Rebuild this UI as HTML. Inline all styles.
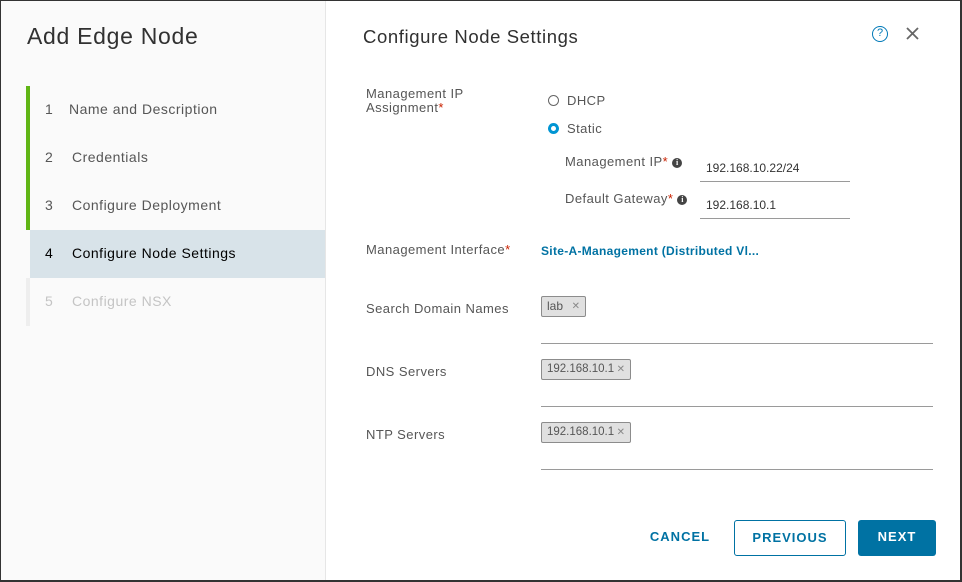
<!DOCTYPE html>
<html><head><style>
*{box-sizing:border-box;margin:0;padding:0}
body{width:962px;height:582px;overflow:hidden;font-family:"Liberation Sans",sans-serif;background:#fff;position:relative}
.frame{position:absolute;left:0;top:0;width:962px;height:582px;border:1px solid #333;border-right-width:2px;border-bottom-width:2px}
.left{position:absolute;left:1px;top:1px;width:325px;height:579px;background:#fafafa;border-right:1px solid #e6e6e6}
.t{position:absolute;font-size:14px;color:#565656;white-space:nowrap}
.step{position:absolute;left:26px;width:299px;height:48px;font-size:14px;color:#565656;letter-spacing:0.5px}
.step span{position:absolute;top:15px}
.lbl{position:absolute;font-size:13px;color:#565656;white-space:nowrap;letter-spacing:0.45px}
.req{color:#c92100}
.line{position:absolute;height:1px;background:#9a9a9a}
.tag{position:absolute;height:21px;border:1px solid #8c8c8c;border-radius:2px;background:#e0e0e0;font-size:12px;line-height:15px;color:#565656;padding:2px 5px;white-space:nowrap}
.tag i{font-style:normal;color:#888;position:absolute;right:5px;top:3px;font-size:10px;line-height:13px}
.info{display:inline-block;width:10px;height:10px;border-radius:50%;background:#444;color:#fff;font-size:8px;font-weight:bold;text-align:center;line-height:10px;vertical-align:1px;margin-left:4px;font-family:"Liberation Serif",serif;letter-spacing:0}
.btn{position:absolute;top:520px;height:36px;font-size:13px;font-weight:bold;letter-spacing:1px;text-align:center;line-height:34px;border-radius:3px}
</style></head><body>
<div class="frame"></div>
<div class="left"></div>
<div class="t" style="left:27px;top:23px;font-size:23px;color:#313131;letter-spacing:0.7px">Add Edge Node</div>
<div style="position:absolute;left:26px;top:86px;width:4px;height:144px;background:#60b515"></div>
<div style="position:absolute;left:26px;top:278px;width:4px;height:48px;background:#eee"></div>
<div class="step" style="top:86px"><span style="left:19px">1</span><span style="left:43px">Name and Description</span></div>
<div class="step" style="top:134px"><span style="left:19px">2</span><span style="left:46px">Credentials</span></div>
<div class="step" style="top:182px"><span style="left:19px">3</span><span style="left:46px">Configure Deployment</span></div>
<div class="step" style="top:230px;left:30px;width:295px;background:#d8e3e9;color:#000"><span style="left:15px">4</span><span style="left:42px">Configure Node Settings</span></div>
<div class="step" style="top:278px;color:#c4c4c4"><span style="left:19px">5</span><span style="left:46px">Configure NSX</span></div>

<div class="t" style="left:363px;top:26px;font-size:18.5px;color:#313131;letter-spacing:0.6px">Configure Node Settings</div>
<div style="position:absolute;left:872px;top:26px;width:16px;height:16px;border:1.5px solid #0079b8;border-radius:50%;color:#0079b8;font-size:11px;text-align:center;line-height:13px">?</div>
<svg style="position:absolute;left:906px;top:27px" width="13" height="13"><path d="M1 1L12 12M12 1L1 12" stroke="#666" stroke-width="1.8"/></svg>

<div class="lbl" style="left:366px;top:87px;line-height:14px">Management IP<br>Assignment<span class="req">*</span></div>
<div style="position:absolute;left:548px;top:95px;width:11px;height:11px;border:1px solid #666;border-radius:50%"></div>
<div class="lbl" style="left:567px;top:93px">DHCP</div>
<div style="position:absolute;left:548px;top:123px;width:11px;height:11px;border:3px solid #0095d3;border-radius:50%;background:#fff"></div>
<div class="lbl" style="left:567px;top:121px">Static</div>
<div class="lbl" style="left:565px;top:154px">Management IP<span class="req">*</span><span class="info">i</span></div>
<div class="lbl" style="left:706px;top:161px;color:#333;font-size:12px;letter-spacing:0">192.168.10.22/24</div>
<div class="line" style="left:700px;top:181px;width:150px"></div>
<div class="lbl" style="left:565px;top:191px">Default Gateway<span class="req">*</span><span class="info">i</span></div>
<div class="lbl" style="left:706px;top:198px;color:#333;font-size:12px;letter-spacing:0">192.168.10.1</div>
<div class="line" style="left:700px;top:218px;width:150px"></div>

<div class="lbl" style="left:366px;top:242px">Management Interface<span class="req">*</span></div>
<div class="lbl" style="left:541px;top:244px;color:#0072a3;font-weight:bold;font-size:12px;letter-spacing:0.3px">Site-A-Management (Distributed Vl...</div>

<div class="lbl" style="left:366px;top:301px">Search Domain Names</div>
<div class="tag" style="left:541px;top:296px;width:45px">lab<i>✕</i></div>
<div class="line" style="left:541px;top:343px;width:392px"></div>
<div class="lbl" style="left:366px;top:364px">DNS Servers</div>
<div class="tag" style="left:541px;top:359px;width:90px;font-size:11.5px">192.168.10.1<i>✕</i></div>
<div class="line" style="left:541px;top:406px;width:392px"></div>
<div class="lbl" style="left:366px;top:427px">NTP Servers</div>
<div class="tag" style="left:541px;top:422px;width:90px;font-size:11.5px">192.168.10.1<i>✕</i></div>
<div class="line" style="left:541px;top:469px;width:392px"></div>

<div class="btn" style="left:642px;width:76px;color:#0072a3">CANCEL</div>
<div class="btn" style="left:734px;width:112px;border:1px solid #0072a3;color:#0072a3">PREVIOUS</div>
<div class="btn" style="left:858px;width:78px;background:#0072a3;color:#fff">NEXT</div>
</body></html>
